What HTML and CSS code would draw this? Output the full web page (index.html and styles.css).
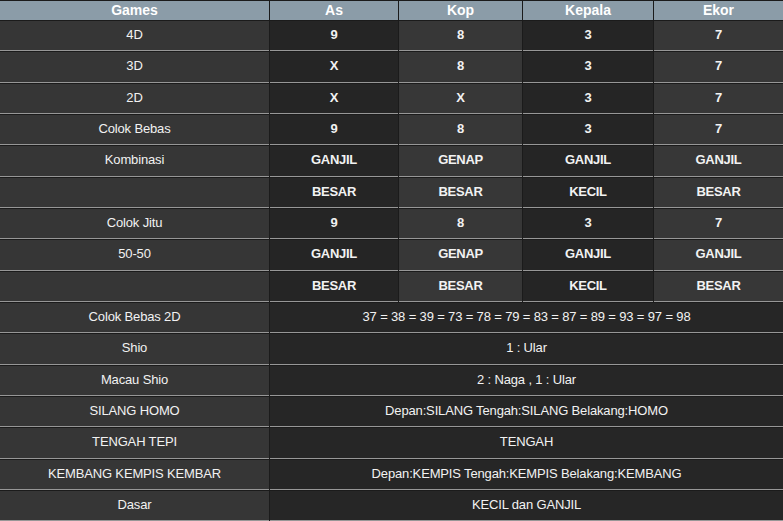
FILE: index.html
```html
<!DOCTYPE html>
<html>
<head>
<meta charset="utf-8">
<link rel="stylesheet" href="styles.css">
</head>
<body>
<table class="result">
  <colgroup>
    <col class="c-games"><col class="c-as"><col class="c-kop"><col class="c-kepala"><col class="c-ekor">
  </colgroup>
  <thead>
    <tr><th>Games</th><th>As</th><th>Kop</th><th>Kepala</th><th>Ekor</th></tr>
  </thead>
  <tbody>
    <tr><td class="name">4D</td><td class="v dk">9</td><td class="v lt">8</td><td class="v dk">3</td><td class="v lt">7</td></tr>
    <tr><td class="name">3D</td><td class="v dk">X</td><td class="v lt">8</td><td class="v dk">3</td><td class="v lt">7</td></tr>
    <tr><td class="name">2D</td><td class="v dk">X</td><td class="v lt">X</td><td class="v dk">3</td><td class="v lt">7</td></tr>
    <tr><td class="name">Colok Bebas</td><td class="v dk">9</td><td class="v lt">8</td><td class="v dk">3</td><td class="v lt">7</td></tr>
    <tr><td class="name">Kombinasi</td><td class="v dk">GANJIL</td><td class="v lt">GENAP</td><td class="v dk">GANJIL</td><td class="v lt">GANJIL</td></tr>
    <tr><td class="name"></td><td class="v dk">BESAR</td><td class="v lt">BESAR</td><td class="v dk">KECIL</td><td class="v lt">BESAR</td></tr>
    <tr><td class="name">Colok Jitu</td><td class="v dk">9</td><td class="v lt">8</td><td class="v dk">3</td><td class="v lt">7</td></tr>
    <tr><td class="name">50-50</td><td class="v dk">GANJIL</td><td class="v lt">GENAP</td><td class="v dk">GANJIL</td><td class="v lt">GANJIL</td></tr>
    <tr><td class="name"></td><td class="v dk">BESAR</td><td class="v lt">BESAR</td><td class="v dk">KECIL</td><td class="v lt">BESAR</td></tr>
    <tr><td class="name">Colok Bebas 2D</td><td class="wide" colspan="4">37 = 38 = 39 = 73 = 78 = 79 = 83 = 87 = 89 = 93 = 97 = 98</td></tr>
    <tr><td class="name">Shio</td><td class="wide" colspan="4">1 : Ular</td></tr>
    <tr><td class="name">Macau Shio</td><td class="wide" colspan="4">2 : Naga , 1 : Ular</td></tr>
    <tr><td class="name">SILANG HOMO</td><td class="wide" colspan="4">Depan:SILANG Tengah:SILANG Belakang:HOMO</td></tr>
    <tr><td class="name">TENGAH TEPI</td><td class="wide" colspan="4">TENGAH</td></tr>
    <tr><td class="name">KEMBANG KEMPIS KEMBAR</td><td class="wide" colspan="4">Depan:KEMPIS Tengah:KEMPIS Belakang:KEMBANG</td></tr>
    <tr><td class="name">Dasar</td><td class="wide" colspan="4">KECIL dan GANJIL</td></tr>
  </tbody>
</table>
</body>
</html>
```

FILE: styles.css
```css
html, body {
  margin: 0;
  padding: 0;
  background: #1b1b1b;
  overflow: hidden;
}

.result {
  table-layout: fixed;
  width: 785px;
  margin: 0 0 0 -1px;
  border-collapse: separate;
  border-spacing: 1px;
  background: #1b1b1b;
  font-family: "Liberation Sans", Arial, sans-serif;
  color: #f2f2f2;
}

.c-games { width: 269px; }
.c-as { width: 128px; }
.c-kop { width: 123px; }
.c-kepala { width: 130px; }
.c-ekor { width: 129px; }

.result th {
  height: 18px;
  padding: 0 0 1px;
  background: #8b9ca8;
  color: #ffffff;
  font-size: 14px;
  font-weight: bold;
  text-align: center;
  vertical-align: middle;
  line-height: 16px;
}

.result td {
  height: 27.33px;
  padding: 0 0 2px;
  text-align: center;
  vertical-align: middle;
  font-size: 13px;
  line-height: 15px;
  letter-spacing: -0.15px;
  border-bottom: 1px solid #979797;
  white-space: nowrap;
}

.result td.name {
  background: #363636;
}

.result td.v {
  font-weight: bold;
  letter-spacing: -0.3px;
}

.result td.dk {
  background: #252525;
}

.result td.lt {
  background: #373737;
}

.result td.wide {
  background: #262626;
}
```
